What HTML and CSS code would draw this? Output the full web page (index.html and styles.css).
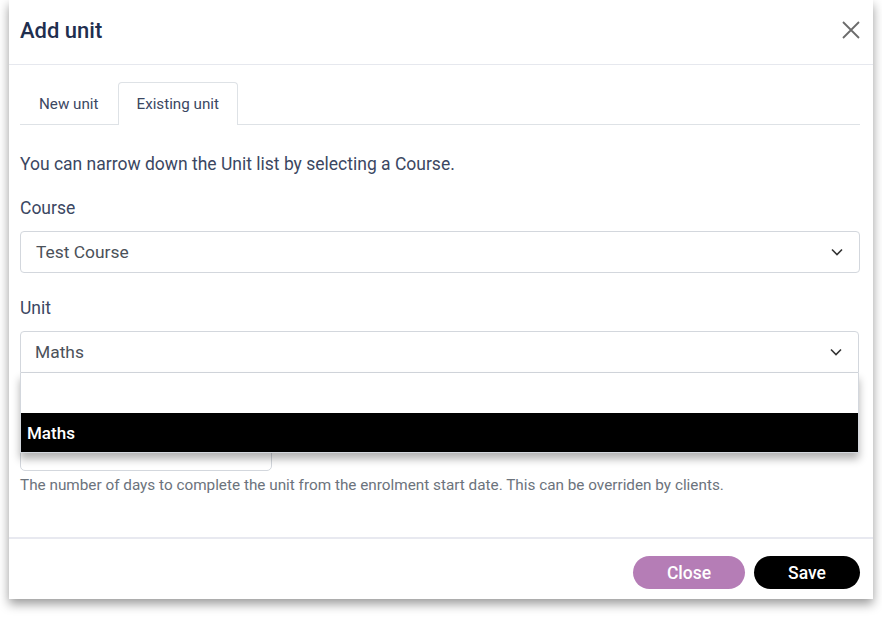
FILE: index.html
```html
<!DOCTYPE html>
<html lang="en">

<head>
  <meta charset="UTF-8">
  <meta name="viewport" content="width=device-width, initial-scale=1.0">
  <title>Add unit</title>
  <link rel="stylesheet" href="styles.css">
</head>

<body>
  <div class="modal">
    <header class="modal-header">
      <h1 class="modal-title">Add unit</h1>
      <button class="close-x" aria-label="Close">
        <svg width="20" height="20" viewBox="0 0 20 20">
          <path d="M2 2 L18 18 M18 2 L2 18" stroke="#6b6b6b" stroke-width="1.8" fill="none" />
        </svg>
      </button>
    </header>

    <main class="modal-body">
      <ul class="tabs">
        <li class="tab">New unit</li>
        <li class="tab tab-active">Existing unit</li>
      </ul>

      <p class="intro">You can narrow down the Unit list by selecting a Course.</p>

      <div class="field field-first">
        <label class="label">Course</label>
        <div class="select">
          <span>Test Course</span>
          <svg class="chevron" width="12" height="8" viewBox="0 0 12 8">
            <path d="M1 1.5 L6 6.5 L11 1.5" stroke="#333" stroke-width="1.6" fill="none" />
          </svg>
        </div>
      </div>

      <div class="field">
        <label class="label">Unit</label>
        <div class="select-wrap">
          <div class="select select-open">
            <span>Maths</span>
            <svg class="chevron" width="12" height="8" viewBox="0 0 12 8">
              <path d="M1 1.5 L6 6.5 L11 1.5" stroke="#333" stroke-width="1.6" fill="none" />
            </svg>
          </div>
          <!-- open dropdown lies over the next field -->
          <ul class="dropdown">
            <li class="option option-empty"></li>
            <li class="option option-selected">Maths</li>
          </ul>
        </div>
      </div>

      <div class="field">
        <label class="label">Days to complete</label>
        <input class="days-input" type="text">
        <p class="help">The number of days to complete the unit from the enrolment start date. This can be overriden by clients.</p>
      </div>
    </main>

    <footer class="modal-footer">
      <button class="btn btn-close">Close</button>
      <button class="btn btn-save">Save</button>
    </footer>
  </div>
</body>

</html>
```

FILE: styles.css
```css
/* Basic reset for body */
body {
  margin: 0;
  padding: 0 9px 18px;
  font-family: Roboto, 'Liberation Sans', sans-serif;
  background-color: #ffffff;
  color: #3b4762;
}

/* Modal box */
.modal {
  width: 864px;
  height: 599px;
  background-color: #ffffff;
  box-shadow: 0 5px 10px rgba(0, 0, 0, 0.4);
  display: flex;
  flex-direction: column;
}

/* Header */
.modal-header {
  height: 65px;
  box-sizing: border-box;
  border-bottom: 1px solid #e6e8ee;
  display: flex;
  align-items: center;
  justify-content: space-between;
  padding: 0 12px 4px 11px;
}

.modal-title {
  margin: 0;
  font-size: 22px;
  font-weight: 500;
  color: #1f2f4f;
}

.close-x {
  background: none;
  border: none;
  padding: 0;
  width: 20px;
  height: 20px;
  cursor: pointer;
}

/* Body */
.modal-body {
  flex: 1;
  padding: 17px 13px 0 11px;
}

.tabs {
  list-style: none;
  margin: 0;
  padding: 0;
  display: flex;
  border-bottom: 1px solid #dee2e6;
  height: 42px;
}

.tab {
  font-size: 15.2px;
  color: #3b4762;
  padding: 0 18px;
  display: flex;
  align-items: center;
  border: 1px solid transparent;
  border-bottom: none;
  border-radius: 4px 4px 0 0;
  margin-bottom: -1px;
}

.tab-active {
  border-color: #dee2e6;
  background-color: #ffffff;
  height: 42px;
}

.intro {
  margin: 27px 0 0;
  font-size: 17.5px;
  line-height: 24px;
}

/* Form fields */
.field {
  margin-top: 23px;
}

.field-first {
  margin-top: 20px;
}

.label {
  display: block;
  font-size: 17.5px;
  line-height: 24px;
  margin-bottom: 11px;
  color: #3b4762;
}

.select {
  height: 42px;
  box-sizing: border-box;
  border: 1px solid #d3d7dd;
  border-radius: 4px;
  display: flex;
  align-items: center;
  justify-content: space-between;
  padding: 0 16px 0 15px;
  font-size: 17.4px;
  color: #4b5159;
}

.select-wrap {
  position: relative;
}

.select-open {
  border-radius: 4px 4px 0 0;
  margin-right: 1px;
  padding-left: 14px;
}

.dropdown {
  position: absolute;
  top: 42px;
  left: 0;
  right: 1px;
  margin: 0;
  padding: 0;
  list-style: none;
  background-color: #ffffff;
  border: 1px solid #d3d7dd;
  border-top: none;
  box-shadow: 0 6px 8px rgba(0, 0, 0, 0.3);
  z-index: 2;
}

.option {
  height: 39px;
  display: flex;
  align-items: center;
  padding: 0 6px;
  font-size: 17px;
  font-weight: 500;
}

.option-empty {
  height: 40px;
}

.option-selected {
  background-color: #000000;
  color: #ffffff;
}

.days-input {
  display: block;
  width: 252px;
  height: 40px;
  box-sizing: border-box;
  border: 1px solid #d3d7dd;
  border-radius: 5px;
  margin: 0;
}

.help {
  margin: 4px 0 0;
  font-size: 15.3px;
  line-height: 20px;
  color: #6c737c;
}

/* Footer */
.modal-footer {
  height: 62px;
  box-sizing: border-box;
  border-top: 2px solid #e8e9f0;
  display: flex;
  justify-content: flex-end;
  align-items: flex-start;
  gap: 9px;
  padding: 17px 13px 0;
}

.btn {
  height: 33px;
  border: none;
  border-radius: 17px;
  color: #ffffff;
  font-family: Roboto, 'Liberation Sans', sans-serif;
  font-size: 17.5px;
  font-weight: 500;
  cursor: pointer;
}

.btn-close {
  width: 112px;
  background-color: #b57db6;
}

.btn-save {
  width: 106px;
  background-color: #000000;
}
```
